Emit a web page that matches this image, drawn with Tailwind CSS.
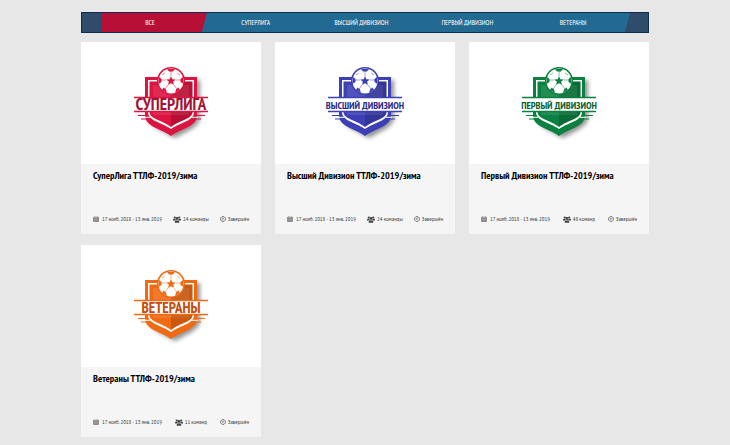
<!DOCTYPE html>
<html lang="ru">
<head>
  <meta charset="UTF-8">
  <meta name="viewport" content="width=device-width, initial-scale=1.0">
  <title>Турниры ТТЛФ</title>
  <script src="https://cdn.jsdelivr.net/npm/@tailwindcss/browser@4"></script>
</head>
<body class="min-h-screen bg-[#e7e7e7] font-['PT_Sans_Narrow','Liberation_Sans_Narrow','Roboto_Condensed','Open_Sans_Condensed','Liberation_Sans',sans-serif] text-black">

<!-- Shared artwork -->
<svg class="absolute size-0" aria-hidden="true">
  <defs>
    <filter id="soft" x="-20%" y="-20%" width="150%" height="150%">
      <feGaussianBlur stdDeviation="2" />
    </filter>
    <path id="star" d="M0 -5 L1.3 -1.7 L4.8 -1.5 L2.1 0.7 L3 4.1 L0 2.2 L-3 4.1 L-2.1 0.7 L-4.8 -1.5 L-1.3 -1.7 Z" />

    <symbol id="shield" viewBox="0 0 100 90">
      <path d="M28 22 H79 V60 C79 68 67 73 54 80 C41 73 28 68 28 60 Z" fill="#000" fill-opacity=".42" filter="url(#soft)" />
      <path d="M24 19 H76 V57 C76 69 61 70 50 78 C39 70 24 69 24 57 Z" fill="currentColor" />
      <path d="M27 22 H73 V54 C73 63 60 64 50 71 C40 64 27 63 27 54 Z" fill="#fff" />
      <path d="M28.500 23.500 H71.500 V54 C71.500 61 59 62 50 69 C41 62 28.500 61 28.500 54 Z" fill="currentColor" />
      <path d="M32 27 H68 V57 H32 Z" fill="#fff" fill-opacity=".1" />
      <path d="M50 23.500 H71.500 V54 C71.500 61 59 62 50 69 Z" fill="#000" fill-opacity=".16" />

      <!-- ball -->
      <circle cx="50" cy="23" r="14" fill="currentColor" />
      <circle cx="50" cy="23" r="12.500" fill="#fff" />
      <g fill="currentColor">
        <use href="#star" x="50" y="23" />
        <path d="M46 11 H54 L52 13.500 H48 Z" />
        <path d="M62 19 L62.500 26 L59.500 24 L59.500 21 Z" />
        <path d="M38 19 L37.500 26 L40.500 24 L40.500 21 Z" />
        <path d="M41 32 L42.500 29.500 L45 31.500 L46 35 Z" />
        <path d="M59 32 L57.500 29.500 L55 31.500 L54 35 Z" />
      </g>
      <path d="M50 13 V18 M60 22 H55 M40 22 H45 M44 31 L47 27 M56 31 L53 27 M41 17 L44 15 M59 17 L56 15" fill="none" stroke="currentColor" stroke-width=".5" />

      <!-- name band -->
      <path d="M13 39 H87 V54 H13 Z" fill="#fff" />
      <path d="M13 39.500 H87 M13 53.500 H87" stroke="currentColor" stroke-width="1.300" />
      <path d="M17 57.500 H26 M20 61 H26 M74 57.500 H84 M73 61 H80" stroke="currentColor" stroke-width="1" />
      <path d="M24 59.300 H29 M71 59.300 H77" stroke="#fff" stroke-width="1" />
    </symbol>

    <symbol id="calendar" viewBox="0 0 14 14">
      <path d="M1 3 H13 V13 H1 Z M1 6 H13 M4 6 V13 M7 6 V13 M10 6 V13 M1 9.500 H13 M4 1 V4 M10 1 V4" fill="none" stroke="currentColor" stroke-width="1.200" />
    </symbol>
    <symbol id="users" viewBox="0 0 16 14">
      <g fill="currentColor">
        <circle cx="3.500" cy="3" r="2.200" />
        <circle cx="12.500" cy="3" r="2.200" />
        <circle cx="8" cy="5" r="2.800" />
        <path d="M0 9 V7 Q0 5.500 2 5.500 H4.500 Q5 7.500 6 8 Q4 8 3.500 9 Z" />
        <path d="M16 9 V7 Q16 5.500 14 5.500 H11.500 Q11 7.500 10 8 Q12 8 12.500 9 Z" />
        <path d="M3.500 13 V11 Q3.500 8.500 6 8.300 Q8 9.500 10 8.300 Q12.500 8.500 12.500 11 V13 Q12.500 13.500 11.500 13.500 H4.500 Q3.500 13.500 3.500 13 Z" />
      </g>
    </symbol>
    <symbol id="clock" viewBox="0 0 14 14">
      <path d="M7 1.300 A5.700 5.700 0 1 1 6.990 1.300 Z M7.300 4 V7.500 H5" fill="none" stroke="currentColor" stroke-width="1.600" />
    </symbol>
  </defs>
</svg>

<main class="mx-auto w-full max-w-[568px] py-3">

  <!-- Division filter -->
  <nav class="border border-[#0f2d4f] bg-[#304c6b] pr-[18px] pl-[19px]" aria-label="Дивизионы">
    <div class="flex bg-[#226a92] text-[7px] leading-[19px] text-white [clip-path:polygon(0_0,100%_0,calc(100%-5px)_100%,0_100%)]">
      <button type="button" class="flex-1 bg-[#b80f37] pr-2 [clip-path:polygon(0_0,100%_0,calc(100%-5px)_100%,0_100%)]" aria-pressed="true">ВСЕ</button>
      <button type="button" class="flex-1 pr-2">СУПЕРЛИГА</button>
      <button type="button" class="flex-1 pr-2 whitespace-nowrap">ВЫСШИЙ ДИВИЗИОН</button>
      <button type="button" class="flex-1 pr-2 whitespace-nowrap">ПЕРВЫЙ ДИВИЗИОН</button>
      <button type="button" class="flex-1 pr-2">ВЕТЕРАНЫ</button>
    </div>
  </nav>

  <!-- Tournament cards -->
  <div class="mt-[9px] grid grid-cols-3 gap-x-3.5 gap-y-[11px]">

    <article class="bg-[#f5f5f5]">
      <div class="flex justify-center bg-white py-4">
        <svg class="h-[90px] w-[100px] text-[#dc1440]" viewBox="0 0 100 90" role="img" aria-label="СуперЛига">
          <use href="#shield" />
          <text x="50" y="52" text-anchor="middle" font-size="17" font-weight="700" fill="#a31334">СУПЕРЛИГА</text>
        </svg>
      </div>
      <div class="px-3 pt-1 pb-2.5">
        <h2 class="text-[10px] leading-4 font-bold whitespace-nowrap"><a href="#">СуперЛига ТТЛФ-2019/зима</a></h2>
        <ul class="mt-[30px] flex justify-between text-[6px] leading-[10px] whitespace-nowrap text-[#444]">
          <li class="flex items-center gap-[3px]"><svg class="size-[6px]"><use href="#calendar" /></svg>17 нояб. 2018 - 13 янв. 2019</li>
          <li class="flex items-center gap-0.5"><svg class="h-[7px] w-[8px]"><use href="#users" /></svg>24 команды</li>
          <li class="flex items-center gap-0.5"><svg class="size-[6px]"><use href="#clock" /></svg>Завершён</li>
        </ul>
      </div>
    </article>

    <article class="bg-[#f5f5f5]">
      <div class="flex justify-center bg-white py-4">
        <svg class="h-[90px] w-[100px] text-[#3d40b4]" viewBox="0 0 100 90" role="img" aria-label="Высший Дивизион">
          <use href="#shield" />
          <text x="50" y="51" text-anchor="middle" font-size="10" font-weight="700" fill="#292b87">ВЫСШИЙ ДИВИЗИОН</text>
        </svg>
      </div>
      <div class="px-3 pt-1 pb-2.5">
        <h2 class="text-[10px] leading-4 font-bold whitespace-nowrap"><a href="#">Высший Дивизион ТТЛФ-2019/зима</a></h2>
        <ul class="mt-[30px] flex justify-between text-[6px] leading-[10px] whitespace-nowrap text-[#444]">
          <li class="flex items-center gap-[3px]"><svg class="size-[6px]"><use href="#calendar" /></svg>17 нояб. 2018 - 13 янв. 2019</li>
          <li class="flex items-center gap-0.5"><svg class="h-[7px] w-[8px]"><use href="#users" /></svg>24 команды</li>
          <li class="flex items-center gap-0.5"><svg class="size-[6px]"><use href="#clock" /></svg>Завершён</li>
        </ul>
      </div>
    </article>

    <article class="bg-[#f5f5f5]">
      <div class="flex justify-center bg-white py-4">
        <svg class="h-[90px] w-[100px] text-[#0b8040]" viewBox="0 0 100 90" role="img" aria-label="Первый Дивизион">
          <use href="#shield" />
          <text x="50" y="51" text-anchor="middle" font-size="10" font-weight="700" fill="#07612f">ПЕРВЫЙ ДИВИЗИОН</text>
        </svg>
      </div>
      <div class="px-3 pt-1 pb-2.5">
        <h2 class="text-[10px] leading-4 font-bold whitespace-nowrap"><a href="#">Первый Дивизион ТТЛФ-2019/зима</a></h2>
        <ul class="mt-[30px] flex justify-between text-[6px] leading-[10px] whitespace-nowrap text-[#444]">
          <li class="flex items-center gap-[3px]"><svg class="size-[6px]"><use href="#calendar" /></svg>17 нояб. 2018 - 13 янв. 2019</li>
          <li class="flex items-center gap-0.5"><svg class="h-[7px] w-[8px]"><use href="#users" /></svg>48 команд</li>
          <li class="flex items-center gap-0.5"><svg class="size-[6px]"><use href="#clock" /></svg>Завершён</li>
        </ul>
      </div>
    </article>

    <article class="bg-[#f5f5f5]">
      <div class="flex justify-center bg-white py-4">
        <svg class="h-[90px] w-[100px] text-[#ef6a13]" viewBox="0 0 100 90" role="img" aria-label="Ветераны">
          <use href="#shield" />
          <text x="50" y="52" text-anchor="middle" font-size="15" font-weight="700" fill="#c24d0c">ВЕТЕРАНЫ</text>
        </svg>
      </div>
      <div class="px-3 pt-1 pb-2.5">
        <h2 class="text-[10px] leading-4 font-bold whitespace-nowrap"><a href="#">Ветераны ТТЛФ-2019/зима</a></h2>
        <ul class="mt-[30px] flex justify-between text-[6px] leading-[10px] whitespace-nowrap text-[#444]">
          <li class="flex items-center gap-[3px]"><svg class="size-[6px]"><use href="#calendar" /></svg>17 нояб. 2018 - 13 янв. 2019</li>
          <li class="flex items-center gap-0.5"><svg class="h-[7px] w-[8px]"><use href="#users" /></svg>11 команд</li>
          <li class="flex items-center gap-0.5"><svg class="size-[6px]"><use href="#clock" /></svg>Завершён</li>
        </ul>
      </div>
    </article>

  </div>
</main>

</body>
</html>
